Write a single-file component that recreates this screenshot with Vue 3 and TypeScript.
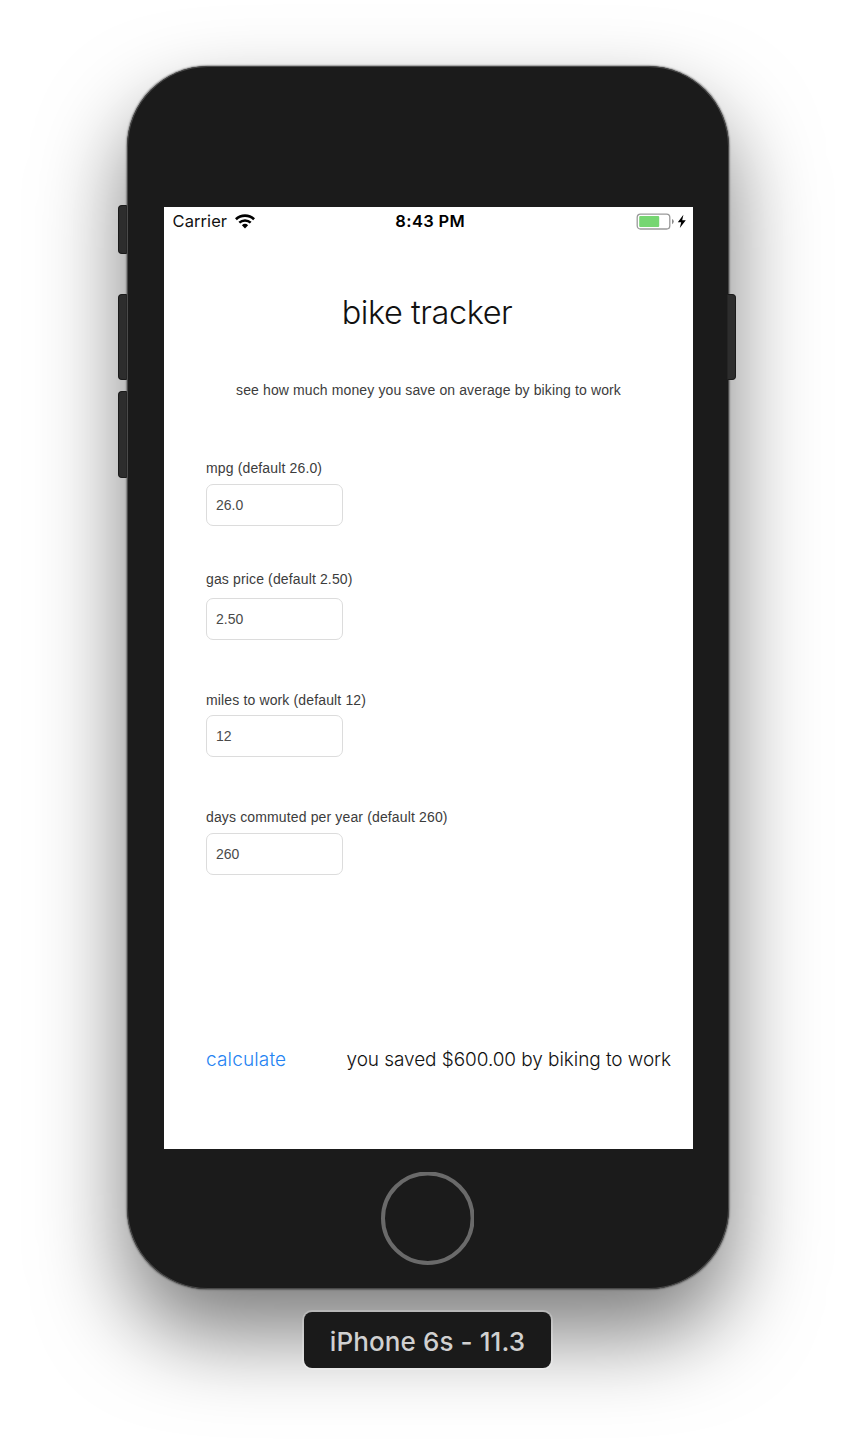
<script setup lang="ts">
import { reactive, ref } from 'vue'

interface Field {
  key: string
  label: string
  value: string
}

const fields = reactive<Field[]>([
  { key: 'mpg', label: 'mpg (default 26.0)', value: '26.0' },
  { key: 'gas', label: 'gas price (default 2.50)', value: '2.50' },
  { key: 'miles', label: 'miles to work (default 12)', value: '12' },
  { key: 'days', label: 'days commuted per year (default 260)', value: '260' },
])

const saved = ref('600.00')

function calculate(): void {
  const [mpg, gas, miles, days] = fields.map((f) => Number(f.value))
  saved.value = (((miles * 2 * days) / mpg) * gas).toFixed(2)
}
</script>

<template>
  <main class="stage">
    <div class="device">
      <i class="key mute"></i>
      <i class="key up"></i>
      <i class="key down"></i>
      <i class="key power"></i>
      <div class="body">
        <section class="screen">
          <header class="status">
            <div class="carrier">
              <span class="carrier-name">Carrier</span>
              <svg class="wifi" width="20" height="15" viewBox="0 0 20 15">
                <path d="M0.9 5.2 A13.2 13.2 0 0 1 19.1 5.2" fill="none" stroke="#000" stroke-width="2.7" />
                <path d="M4.3 8.7 A8.4 8.4 0 0 1 15.7 8.7" fill="none" stroke="#000" stroke-width="2.5" />
                <path d="M10 14.4 L6.9 11.3 A4.5 4.5 0 0 1 13.1 11.3 Z" fill="#000" />
              </svg>
            </div>
            <span class="time">8:43 PM</span>
            <div class="power-state">
              <svg width="50" height="18" viewBox="0 0 50 18">
                <rect x="0.2" y="1.2" width="32.6" height="14.8" rx="3.2" fill="#fff" stroke="#9a9a9a" stroke-width="1.3" />
                <rect x="2.2" y="3.1" width="20" height="11" rx="1" fill="#76d672" />
                <path d="M35 6 Q36.8 6.8 36.8 8.6 Q36.8 10.4 35 11.2 Z" fill="#8c8c8c" />
                <path d="M46.4 1.8 L40.8 9.2 L44.2 9.2 L42.8 15 L48.8 7.3 L45.2 7.3 Z" fill="#000" />
              </svg>
            </div>
          </header>
          <h1 class="title">bike tracker</h1>
          <p class="intro">see how much money you save on average by biking to work</p>
          <form class="form" @submit.prevent="calculate">
            <div v-for="f in fields" :key="f.key" class="field" :class="f.key">
              <label :for="f.key">{{ f.label }}</label>
              <input :id="f.key" v-model="f.value" type="text" />
            </div>
            <div class="result">
              <button type="submit">calculate</button>
              <output>you saved ${{ saved }} by biking to work</output>
            </div>
          </form>
        </section>
        <svg class="home" width="93" height="93" viewBox="0 0 93 93">
          <circle cx="46.8" cy="46.2" r="44.8" fill="none" stroke="#6a6a6a" stroke-width="4" />
        </svg>
      </div>
    </div>
    <div class="caption">iPhone 6s - 11.3</div>
  </main>
</template>

<style>
html,
body {
  margin: 0;
  background: #fff;
}
</style>

<style scoped>
.stage {
  box-sizing: border-box;
  width: 856px;
  height: 1452px;
  padding-top: 66px;
  overflow: hidden;
  display: flex;
  flex-direction: column;
  align-items: center;
  font-family: Inter, 'Liberation Sans', sans-serif;
}
.device {
  position: relative;
  flex: none;
  width: 602px;
  height: 1223px;
}
.body {
  box-sizing: border-box;
  width: 602px;
  height: 1223px;
  padding-top: 141px;
  border-radius: 81px;
  background: #1b1b1b;
  box-shadow:
    inset 0 0 0 1px #4a4a4a,
    0 0 1.5px 0.5px rgba(0, 0, 0, 0.35),
    0 44px 88px rgba(0, 0, 0, 0.52);
  display: flex;
  flex-direction: column;
  align-items: center;
}
.key {
  position: absolute;
  z-index: 1;
  left: -9px;
  width: 9px;
  box-sizing: border-box;
  background: #2d2d2d;
  border: 1px solid #1a1a1a;
  border-right-color: #252525;
  border-radius: 4px 0 0 4px;
}
.mute { top: 139px; height: 49px; }
.up { top: 228px; height: 86px; }
.down { top: 325px; height: 87px; }
.power {
  top: 228px;
  left: 600px;
  height: 86px;
  border: 1px solid #1a1a1a;
  border-left-color: #252525;
  border-radius: 0 4px 4px 0;
}
.screen {
  width: 529px;
  height: 942px;
  margin-left: 1px;
  flex: none;
  background: #fff;
  color: #111;
}
.status {
  height: 29px;
  display: grid;
  grid-template-columns: 1fr auto 1fr;
  align-items: center;
  padding: 0 6px 0 8.5px;
}
.carrier {
  display: flex;
  align-items: center;
  gap: 7.5px;
}
.carrier-name {
  font-size: 16.5px;
  letter-spacing: 0.08px;
  line-height: 20px;
  padding-bottom: 1px;
}
.wifi {
  display: block;
  margin-top: -1px;
}
.time {
  font-size: 16.5px;
  font-weight: 600;
  letter-spacing: 0.35px;
  line-height: 20px;
  padding: 0 0 1px 1px;
  color: #000;
}
.power-state {
  display: flex;
  justify-content: flex-end;
}
.power-state svg {
  display: block;
  overflow: visible;
}
.title {
  margin: 53px 3px 0 0;
  height: 48px;
  line-height: 48px;
  text-align: center;
  font-size: 32.5px;
  font-weight: 300;
  letter-spacing: -0.45px;
}
.intro {
  margin: 43px 0 0;
  height: 20px;
  line-height: 20px;
  text-align: center;
  font-family: 'Liberation Sans', Arial, sans-serif;
  font-size: 14px;
  letter-spacing: 0.12px;
  color: #3c3c3c;
  white-space: nowrap;
}
.form {
  margin: 58px 0 0 42px;
}
.field {
  display: flex;
  flex-direction: column;
  gap: 6px;
  height: 68px;
  margin-bottom: 43px;
}
.gas {
  gap: 9px;
  height: 71px;
  margin-bottom: 50px;
}
.miles {
  gap: 5px;
  height: 67px;
  margin-bottom: 50px;
}
.days {
  margin-bottom: 0;
}
.field label {
  height: 20px;
  line-height: 20px;
  font-family: 'Liberation Sans', Arial, sans-serif;
  font-size: 14px;
  letter-spacing: 0.14px;
  color: #3c3c3c;
  white-space: nowrap;
}
.field input {
  box-sizing: border-box;
  width: 137px;
  height: 42px;
  padding: 0 9px 1px;
  border: 1px solid #dcdcdc;
  border-radius: 7px;
  outline: none;
  background: #fff;
  color: #4a4a4a;
  font-family: 'Liberation Sans', Arial, sans-serif;
  font-size: 14px;
}
.result {
  display: flex;
  align-items: center;
  justify-content: space-between;
  height: 30px;
  margin: 169px 22px 0 0;
  white-space: nowrap;
}
.result button {
  padding: 0;
  border: 0;
  background: none;
  color: #2583f2;
  font-family: inherit;
  font-size: 19px;
  font-weight: 300;
  letter-spacing: 0.15px;
}
.result output {
  font-size: 19px;
  font-weight: 300;
  letter-spacing: -0.07px;
}
.home {
  display: block;
  margin-top: 23px;
  margin-right: 1px;
}
.caption {
  position: relative;
  flex: none;
  width: 247px;
  height: 56px;
  margin-top: 23px;
  margin-right: 1px;
  border-radius: 8px;
  background: #1a1a1a;
  box-shadow: 0 0 0 2px rgba(255, 255, 255, 0.22);
  color: #d0d0d0;
  text-align: center;
  line-height: 59px;
  font-size: 26px;
  font-weight: 500;
  letter-spacing: 0.1px;
}
</style>
